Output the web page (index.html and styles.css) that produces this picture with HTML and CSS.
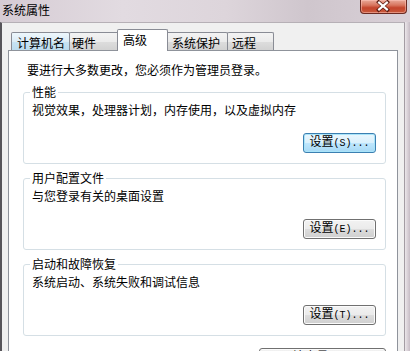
FILE: index.html
```html
<!DOCTYPE html>
<html lang="zh-CN">
<head>
<meta charset="utf-8">
<title>系统属性</title>
<link rel="stylesheet" href="styles.css">
</head>
<body>
<div class="titlebar">
  <span class="title">系统属性</span>
  <div class="close">
    <svg width="47" height="14" viewBox="0 0 47 14">
      <path d="M19 3 L28 11 M28 3 L19 11" stroke="#5a1a10" stroke-width="3.6" stroke-linecap="square"/>
      <path d="M19.5 3.5 L27.5 10.5 M27.5 3.5 L19.5 10.5" stroke="#ffffff" stroke-width="2.2" stroke-linecap="square"/>
    </svg>
  </div>
</div>
<div class="frame">
  <div class="client">
    <div class="tabs">
      <div class="tab hover w1">计算机名</div>
      <div class="tab w2">硬件</div>
      <div class="tab sel w3">高级</div>
      <div class="tab w4">系统保护</div>
      <div class="tab w5">远程</div>
    </div>
    <div class="panel">
      <p class="note">要进行大多数更改，您必须作为管理员登录。</p>
      <fieldset class="group">
        <legend>性能</legend>
        <p class="desc">视觉效果，处理器计划，内存使用，以及虚拟内存</p>
        <div class="actions"><button class="btn default">设置<span class="acc">(S)...</span></button></div>
      </fieldset>
      <fieldset class="group">
        <legend>用户配置文件</legend>
        <p class="desc">与您登录有关的桌面设置</p>
        <div class="actions"><button class="btn">设置<span class="acc">(E)...</span></button></div>
      </fieldset>
      <fieldset class="group">
        <legend>启动和故障恢复</legend>
        <p class="desc">系统启动、系统失败和调试信息</p>
        <div class="actions"><button class="btn">设置<span class="acc">(T)...</span></button></div>
      </fieldset>
      <div class="actions bottom"><button class="btn wide">环境变量<span class="acc">(N)...</span></button></div>
    </div>
  </div>
  <div class="edge"></div>
</div>
</body>
</html>
```
FILE: styles.css
```css
* { box-sizing: border-box; }
html, body { margin: 0; padding: 0; }
body {
  width: 410px;
  height: 351px;
  overflow: hidden;
  font-family: "Noto Sans CJK SC", "Noto Sans", sans-serif;
  font-size: 12px;
  line-height: 12px;
  color: #000;
  background: linear-gradient(90deg, #d6ccd4 0%, #e2dbe1 30%, #ddd5db 55%, #cfc6cd 75%, #d9d0d7 100%);
}
.titlebar {
  height: 22px;
  display: flex;
  justify-content: space-between;
  align-items: flex-start;
}
.title {
  padding: 4px 0 0 2px;
  font-size: 12px;
  line-height: 12px;
}
.close {
  width: 47px;
  height: 14px;
  margin-right: 3px;
  border: 1px solid #6b2a22;
  border-top: none;
  border-radius: 0 0 4px 4px;
  background: linear-gradient(#e9a898 0%, #d8765f 40%, #c4442c 60%, #c85a3c 100%);
  box-shadow: inset 0 0 0 1px rgba(255,200,190,0.5);
  display: flex;
}
.close svg { display: block; margin: -1px 0 0 -1px; }
.frame {
  display: flex;
  height: 329px;
}
.client {
  width: 405px;
  border-left: 2px solid #57555a;
  border-right: 1px solid #a39ca3;
  border-top: 1px solid #b6b0b6;
  background: #f0f0f0;
  padding: 6px 6px 0 6px;
  display: flex;
  flex-direction: column;
}
.edge {
  flex: 1;
  background: linear-gradient(90deg, #ebe6ea, #c6bcc5);
}
.tabs {
  display: flex;
  align-items: flex-start;
  height: 22px;
  margin-bottom: -1px;
  padding-left: 3px;
  position: relative;
  z-index: 1;
}
.tab {
  height: 18px;
  margin-top: 3px;
  border: 1px solid #898c95;
  border-bottom: none;
  border-radius: 2px 2px 0 0;
  background: linear-gradient(#f3f3f3 0%, #ebebeb 50%, #dddddd 51%, #d2d2d2 100%);
  padding: 4px 0 0 5px;
  white-space: nowrap;
}
.tab + .tab { margin-left: -1px; }
.tab.hover {
  background: linear-gradient(#eef7fc 0%, #dcecf6 50%, #c8e3f3 51%, #bcdcef 100%);
}
.w1 { width: 59px; }
.w2 { width: 51px; padding-left: 2px; }
.w3 { width: 51px; }
.w4 { width: 63px; padding-left: 6px; }
.w5 { width: 47px; padding-left: 4px; }
.tab.sel {
  height: 22px;
  margin-top: 0;
  margin-left: -3px;
  margin-right: -2px;
  background: #ffffff;
  position: relative;
  z-index: 2;
  padding-top: 4px;
}
.panel {
  flex: 1;
  background: #ffffff;
  border: 1px solid #8f939b;
  border-bottom: none;
  padding: 13px 11px 0 14px;
}
.note {
  margin: 0 0 0 4px;
  line-height: 12px;
}
.group {
  margin: 10px 0 0 0;
  border: 1px solid #d5dfe5;
  border-radius: 3px;
  padding: 0 9px 10px 6px;
  min-width: 0;
}
.group + .group { margin-top: 8px; }
.group legend {
  padding: 0 2px;
  line-height: 12px;
}
.desc {
  margin: 6px 0 0 2px;
  line-height: 12px;
}
.actions {
  display: flex;
  justify-content: flex-end;
  margin-top: 17px;
}
.actions.bottom { margin-top: 12px; }
.btn {
  width: 73px;
  height: 20px;
  padding: 0 0 2px 0;
  border: 1px solid #707070;
  border-radius: 3px;
  background: linear-gradient(#f2f2f2 0%, #ebebeb 50%, #dddddd 51%, #cfcfcf 100%);
  box-shadow: inset 0 0 0 1px #fbfbfb;
  font-family: "Noto Sans CJK SC", "Noto Sans", sans-serif;
  font-size: 12px;
  line-height: 12px;
  color: #000;
  white-space: nowrap;
}
.btn.default {
  border-color: #3c7fb1;
  background: linear-gradient(#eaf6fd 0%, #d9f0fc 50%, #bee6fd 51%, #a7d9f5 100%);
  box-shadow: inset 0 0 0 1px #a9e4f9;
}
.btn.wide { width: 127px; }
.acc {
  font-family: "Liberation Mono", monospace;
  font-size: 10px;
}
```
